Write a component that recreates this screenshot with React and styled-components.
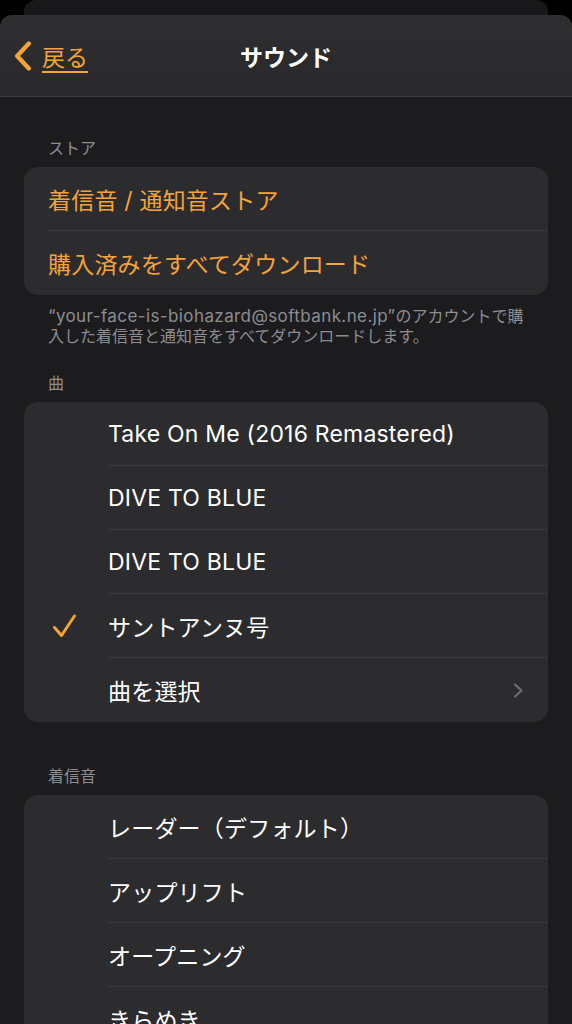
import React from "react";
import styled, { createGlobalStyle } from "styled-components";

const GlobalStyle = createGlobalStyle`
  body {
    margin: 0;
    background: #000000;
    font-family: Inter, "Noto Sans CJK JP", "Noto Sans", sans-serif;
    -webkit-font-smoothing: antialiased;
  }
  * {
    box-sizing: border-box;
  }
`;

const ORANGE = "#f4a23a";

const Screen = styled.div`
  width: 572px;
  height: 1024px;
  overflow: hidden;
  background: #000000;
`;

const BackSheet = styled.div`
  height: 15px;
  margin: 0 24px;
  background: #19191b;
  border-radius: 12px 12px 0 0;
`;

const Sheet = styled.div`
  background: #1c1c1e;
  border-radius: 12px 12px 0 0;
  overflow: hidden;
  min-height: 1009px;
`;

const NavBar = styled.div`
  height: 82px;
  display: grid;
  grid-template-columns: 1fr auto 1fr;
  align-items: center;
  background: linear-gradient(#2e2e30, #29292b);
  border-bottom: 1px solid #3a3a3c;
`;

const BackButton = styled.div`
  display: flex;
  align-items: center;
  gap: 10px;
  padding-left: 14px;
  color: ${ORANGE};
  font-size: 23px;
  font-family: "Noto Sans CJK JP", sans-serif;
`;

const BackLabel = styled.span`
  text-decoration: underline;
  text-underline-offset: 5px;
  text-decoration-thickness: 1.5px;
`;

const Title = styled.div`
  color: #ffffff;
  font-size: 23px;
  font-weight: 700;
  font-family: "Noto Sans CJK JP", sans-serif;
`;

const Content = styled.div`
  padding: 0 24px;
`;

const SectionHeader = styled.div`
  margin-top: ${(p) => p.$gap}px;
  padding: 0 24px;
  height: 30px;
  line-height: 20px;
  font-size: 16px;
  color: #8d8d92;
  font-family: "Noto Sans CJK JP", sans-serif;
`;

const Card = styled.div`
  background: #2c2c2e;
  border-radius: 14px;
  overflow: hidden;
`;

const Row = styled.div`
  height: 64px;
  display: flex;
  align-items: center;
`;

const Mark = styled.div`
  width: ${(p) => p.$indent}px;
  flex-shrink: 0;
  display: flex;
  align-items: center;
  padding-left: ${(p) => (p.$indent > 24 ? 28 : 0)}px;
`;

const RowBody = styled.div`
  flex: 1;
  height: 100%;
  display: flex;
  align-items: center;
  justify-content: space-between;
  padding-right: 24px;
  border-bottom: ${(p) => (p.$last ? "none" : "1px solid #3a3a3c")};
`;

const RowText = styled.span`
  font-size: 23px;
  color: ${(p) => (p.$accent ? ORANGE : "#ffffff")};
  letter-spacing: 0.2px;
`;

const Footer = styled.div`
  padding: 10px 24px 0;
  font-size: 16px;
  line-height: 20px;
  color: #8d8d92;
  font-family: "Noto Sans CJK JP", sans-serif;
`;

const FooterAddress = styled.span`
  font-family: Inter, sans-serif;
  font-size: 17px;
  line-height: 1;
  letter-spacing: 0.4px;
`;

const Chevron = ({ color, w, h, sw }) => (
  <svg width={w} height={h} viewBox="0 0 10 18" fill="none">
    <path
      d="M8.5 1.5L1.5 9l7 7.5"
      stroke={color}
      strokeWidth={sw}
      strokeLinecap="round"
      strokeLinejoin="round"
    />
  </svg>
);

const Disclosure = () => (
  <svg width="11" height="15" viewBox="0 0 11 15" fill="none">
    <path
      d="M2 1.5l6.5 6-6.5 6"
      stroke="#6c6c70"
      strokeWidth="2.2"
      strokeLinecap="round"
      strokeLinejoin="round"
    />
  </svg>
);

const Check = () => (
  <svg width="25" height="26" viewBox="0 0 25 26" fill="none">
    <path
      d="M2.5 14.5l7 8L22.5 3"
      stroke={ORANGE}
      strokeWidth="3"
      strokeLinecap="round"
      strokeLinejoin="round"
    />
  </svg>
);

const songs = [
  { name: "Take On Me (2016 Remastered)" },
  { name: "DIVE TO BLUE" },
  { name: "DIVE TO BLUE" },
  { name: "サントアンヌ号", checked: true },
  { name: "曲を選択", more: true },
];

const ringtones = ["レーダー（デフォルト）", "アップリフト", "オープニング", "きらめき"];

const App = () => {
  return (
    <Screen>
      <GlobalStyle />
      <BackSheet />
      <Sheet>
        <NavBar>
          <BackButton>
            <Chevron color={ORANGE} w={18} h={30} sw={2.6} />
            <BackLabel>戻る</BackLabel>
          </BackButton>
          <Title>サウンド</Title>
          <div />
        </NavBar>
        <Content>
          <SectionHeader $gap={40}>ストア</SectionHeader>
          <Card>
            <Row>
              <Mark $indent={24} />
              <RowBody>
                <RowText $accent>着信音 / 通知音ストア</RowText>
              </RowBody>
            </Row>
            <Row>
              <Mark $indent={24} />
              <RowBody $last>
                <RowText $accent>購入済みをすべてダウンロード</RowText>
              </RowBody>
            </Row>
          </Card>
          <Footer>
            <FooterAddress>“your-face-is-biohazard@softbank.ne.jp”</FooterAddress>
            のアカウントで購入した着信音と通知音をすべてダウンロードします。
          </Footer>
          <SectionHeader $gap={27}>曲</SectionHeader>
          <Card>
            {songs.map((s, i) => (
              <Row key={i}>
                <Mark $indent={84}>{s.checked && <Check />}</Mark>
                <RowBody $last={i === songs.length - 1}>
                  <RowText>{s.name}</RowText>
                  {s.more && <Disclosure />}
                </RowBody>
              </Row>
            ))}
          </Card>
          <SectionHeader $gap={43}>着信音</SectionHeader>
          <Card>
            {ringtones.map((t, i) => (
              <Row key={i}>
                <Mark $indent={84} />
                <RowBody>
                  <RowText>{t}</RowText>
                </RowBody>
              </Row>
            ))}
          </Card>
        </Content>
      </Sheet>
    </Screen>
  );
};

export default App;
